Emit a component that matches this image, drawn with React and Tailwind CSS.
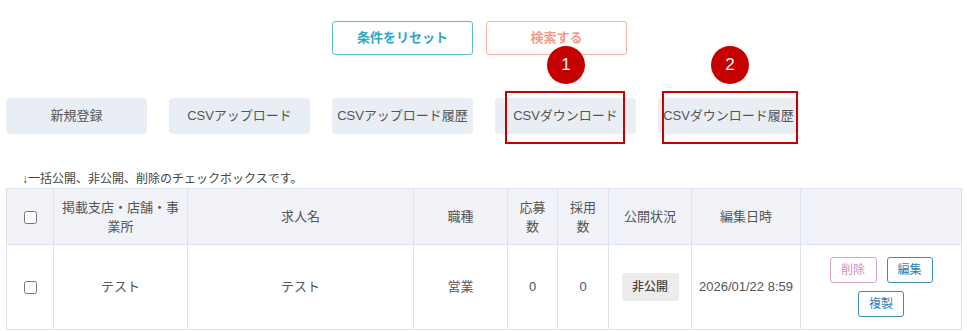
import React from 'react'

const font = { fontFamily: '"Liberation Sans", "Noto Sans CJK JP", sans-serif' }

const actionButtons = ['新規登録', 'CSVアップロード', 'CSVアップロード履歴', 'CSVダウンロード', 'CSVダウンロード履歴']

const Marker = ({ num, className }) => (
    <div className={`absolute w-[38px] h-[38px] rounded-full bg-[#c40000] text-white text-[17px] flex items-center justify-center ${className}`}>
        {num}
    </div>
)

const App = () => {
    return (
        <div className="relative w-[967px] h-[331px] bg-white text-[#555] overflow-hidden" style={font}>
            {/* search buttons */}
            <div className="flex gap-[13px] pt-[21px] pl-[332px]">
                <button className="w-[141px] h-[34px] rounded-[3px] border border-[#5cbfd0] text-[#2ea7c0] text-[13px] font-bold">条件をリセット</button>
                <button className="w-[141px] h-[34px] rounded-[3px] border border-[#f8b3a6] text-[#f59a88] text-[13px] font-bold">検索する</button>
            </div>

            {/* action buttons */}
            <div className="flex gap-[22px] pl-[6px] mt-[43px]">
                {actionButtons.map(t => (
                    <button key={t} className="w-[141px] h-[36px] rounded-[4px] bg-[#e9eef5] text-[13px] text-[#555]">{t}</button>
                ))}
            </div>

            {/* annotations */}
            <Marker num="1" className="left-[547px] top-[46px]" />
            <Marker num="2" className="left-[711px] top-[46px]" />
            <div className="absolute left-[505px] top-[91px] w-[120px] h-[53px] border-2 border-[#c80000]" />
            <div className="absolute left-[662px] top-[91px] w-[136px] h-[53px] border-2 border-[#c80000]" />

            <p className="pl-[22px] mt-[36px] text-[12px] leading-[18px] text-[#444]">↓一括公開、非公開、削除のチェックボックスです。</p>

            {/* table */}
            <table className="ml-[6px] w-[955px] border-collapse text-[13px] text-[#555] table-fixed">
                <colgroup>
                    <col className="w-[47px]" />
                    <col className="w-[134px]" />
                    <col className="w-[226px]" />
                    <col className="w-[94px]" />
                    <col className="w-[50px]" />
                    <col className="w-[51px]" />
                    <col className="w-[83px]" />
                    <col className="w-[109px]" />
                    <col className="w-[161px]" />
                </colgroup>
                <thead>
                    <tr className="h-[56px] bg-[#f1f3f9]">
                        <th className="border border-[#dce3ec] font-normal">
                            <input type="checkbox" className="w-[13px] h-[13px] align-middle" />
                        </th>
                        <th className="border border-[#dce3ec] font-normal px-[7px] leading-[19px]">掲載支店・店舗・事業所</th>
                        <th className="border border-[#dce3ec] font-normal">求人名</th>
                        <th className="border border-[#dce3ec] font-normal">職種</th>
                        <th className="border border-[#dce3ec] font-normal px-[11px] leading-[19px]">応募数</th>
                        <th className="border border-[#dce3ec] font-normal px-[11px] leading-[19px]">採用数</th>
                        <th className="border border-[#dce3ec] font-normal">公開状況</th>
                        <th className="border border-[#dce3ec] font-normal">編集日時</th>
                        <th className="border border-[#dce3ec] font-normal"></th>
                    </tr>
                </thead>
                <tbody>
                    <tr className="h-[85px] text-center">
                        <td className="border border-[#dce3ec]">
                            <input type="checkbox" className="w-[13px] h-[13px] align-middle" />
                        </td>
                        <td className="border border-[#dce3ec]">テスト</td>
                        <td className="border border-[#dce3ec]">テスト</td>
                        <td className="border border-[#dce3ec]">営業</td>
                        <td className="border border-[#dce3ec]">0</td>
                        <td className="border border-[#dce3ec]">0</td>
                        <td className="border border-[#dce3ec]">
                            <span className="inline-flex items-center justify-center w-[57px] h-[28px] rounded-[3px] bg-[#ececec] text-[12px] font-medium text-[#444]">非公開</span>
                        </td>
                        <td className="border border-[#dce3ec] text-[#555]">2026/01/22 8:59</td>
                        <td className="border border-[#dce3ec]">
                            <div className="flex flex-col items-center gap-[8px]">
                                <div className="flex gap-[10px]">
                                    <button className="w-[47px] h-[26px] rounded-[3px] border border-[#dba3c6] text-[#d38fbb] text-[12px]">削除</button>
                                    <button className="w-[46px] h-[26px] rounded-[3px] border border-[#3b8db8] text-[#2d7fae] text-[12px]">編集</button>
                                </div>
                                <button className="w-[46px] h-[26px] rounded-[3px] border border-[#3b8db8] text-[#2d7fae] text-[12px]">複製</button>
                            </div>
                        </td>
                    </tr>
                </tbody>
            </table>
        </div>
    )
}

export default App
